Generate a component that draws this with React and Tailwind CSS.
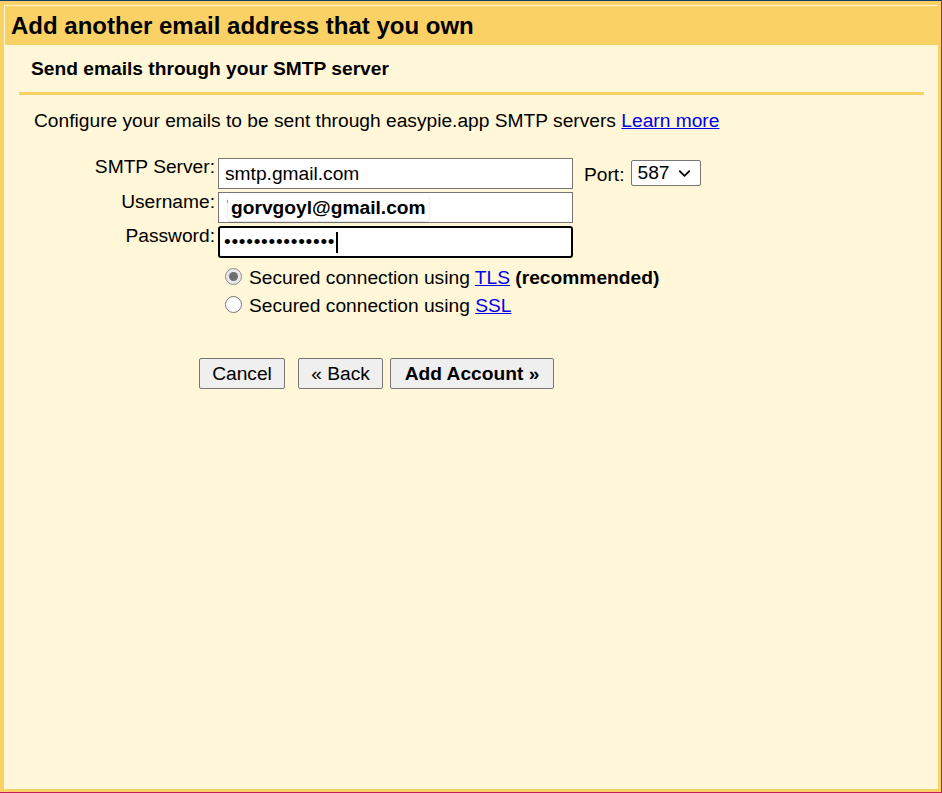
import { ChevronDown } from "lucide-react";

function Radio({ checked }) {
  return (
    <span
      className={
        "mt-[1px] flex h-[17px] w-[17px] shrink-0 items-center justify-center rounded-full border " +
        (checked ? "border-[#8c8c8c] bg-[#e9e9e9]" : "border-[#767676] bg-white")
      }
    >
      {checked && <span className="h-[9px] w-[9px] rounded-full bg-[#6e6e6e]" />}
    </span>
  );
}

export default function App() {
  return (
    <div className="h-[793px] w-full border-t border-r border-b border-t-[#113c6b] border-r-[#c41e5a] border-b-[#c41e5a] bg-[#fad165] pt-1 pr-[3px] pb-[3px] pl-1 font-['Liberation_Sans',Arial,sans-serif] text-black">
      <div className="h-full bg-[#fff7d7] pt-px pl-px">
        {/* title bar */}
        <div className="flex h-[39px] items-center bg-[#fad165] pl-[6px] text-[24px] leading-[28px] font-bold">
          Add another email address that you own
        </div>

        <div className="mx-[14px]">
          <div className="flex h-[47px] items-center pl-[12px] text-[19.2px] leading-[22px] font-bold">
            Send emails through your SMTP server
          </div>
          <div className="h-[3px] bg-[#fad165]" />

          <p className="mt-[15px] pl-[15px] text-[19.2px] leading-[22px]">
            Configure your emails to be sent through easypie.app SMTP servers{" "}
            <a href="#" className="text-[#0000ee] underline">Learn more</a>
          </p>

          {/* form */}
          <div className="mt-[26px] flex flex-col gap-[3px] text-[19.2px] leading-[22px]">
            <div className="flex items-start">
              <label className="-mt-[2px] mr-[3px] w-[196px] text-right">SMTP Server:</label>
              <div className="h-[31px] w-[355px] border border-[#767676] bg-white px-[6px] leading-[29px]">
                smtp.gmail.com
              </div>
              <span className="mt-[6px] ml-[11px]">Port:</span>
              <div className="mt-[2px] ml-[6px] flex h-[26px] w-[70px] items-center justify-between rounded-[2px] border border-[#767676] bg-white pr-[6px] pl-[6px]">
                <span>587</span>
                <ChevronDown size={19} strokeWidth={2.25} />
              </div>
            </div>

            <div className="flex items-start">
              <label className="-mt-[1px] mr-[3px] w-[196px] text-right">Username:</label>
              <div className="relative flex h-[31px] w-[355px] items-center border border-[#767676] bg-white pl-[9px]">
                <span className="absolute top-[7px] left-[8px] h-[3px] w-px bg-[#999]" />
                <span className="rounded-[4px] bg-white px-[3px] leading-[26px] font-bold shadow-[0_1px_3px_rgba(0,0,0,0.15)]">
                  gorvgoyl@gmail.com
                </span>
              </div>
            </div>

            <div className="flex items-start">
              <label className="-mt-[1px] mr-[3px] w-[196px] text-right">Password:</label>
              <div className="flex h-[32px] w-[355px] items-center rounded-[3px] border-2 border-black bg-white pl-[4px]">
                <span className="tracking-[0.7px]">•••••••••••••••</span>
                <span className="ml-[1px] h-[21px] w-[2px] bg-black" />
              </div>
            </div>
          </div>

          {/* radios */}
          <div className="mt-[9px] ml-[206px] flex flex-col gap-[6px] text-[19.2px] leading-[22px]">
            <div className="flex items-start gap-[7px]">
              <Radio checked />
              <span>
                Secured connection using{" "}
                <a href="#" className="text-[#0000ee] underline">TLS</a>{" "}
                <b>(recommended)</b>
              </span>
            </div>
            <div className="flex items-start gap-[7px]">
              <Radio />
              <span>
                Secured connection using{" "}
                <a href="#" className="text-[#0000ee] underline">SSL</a>
              </span>
            </div>
          </div>

          {/* buttons */}
          <div className="mt-[41px] ml-[180px] flex text-[19.2px] leading-[22px]">
            <button className="h-[31px] w-[86px] rounded-[2px] border border-[#767676] bg-[#efefef]">
              Cancel
            </button>
            <button className="ml-[13px] h-[31px] w-[85px] rounded-[2px] border border-[#767676] bg-[#efefef]">
              « Back
            </button>
            <button className="ml-[7px] h-[31px] w-[164px] rounded-[2px] border border-[#767676] bg-[#efefef] font-bold">
              Add Account »
            </button>
          </div>
        </div>
      </div>
    </div>
  );
}
